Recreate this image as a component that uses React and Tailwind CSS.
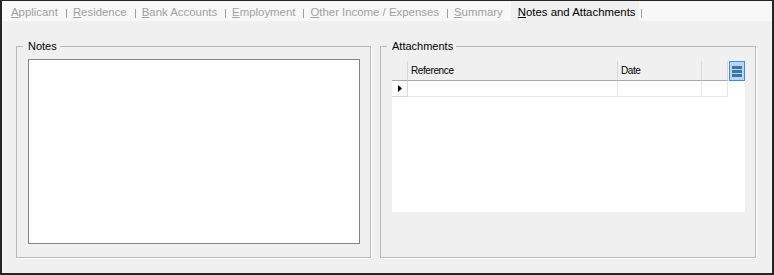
export default function App() {
  const tabs = [
    { first: "A", rest: "pplicant" },
    { first: "R", rest: "esidence" },
    { first: "B", rest: "ank Accounts" },
    { first: "E", rest: "mployment" },
    { first: "O", rest: "ther Income / Expenses" },
  ];
  return (
    <div className="w-[774px] h-[275px] bg-[#f0f0f0] border-t border-l-2 border-r-2 border-b-2 border-[#262626] flex flex-col font-['Liberation_Sans',Arial,sans-serif]">
      <div className="h-[20px] bg-[#f8f8f8] flex items-stretch text-[11.4px] leading-[14px] text-[#a0a0a0]">
        {tabs.map((t, i) => (
          <div key={t.first} className="flex items-stretch">
            <span className={`flex items-center pt-[2px] pr-[8px] ${i === 0 ? "pl-[9px]" : "pl-[6px]"}`}>
              <span>
                <u className="underline-offset-[1px]">{t.first}</u>
                {t.rest}
              </span>
            </span>
            <span className="w-px h-[9px] bg-[#a0a0a0] self-center mt-[5px]" />
          </div>
        ))}
        <span className="flex items-center pt-[2px] pl-[6px] pr-[8px]">
          <span>
            <u className="underline-offset-[1px]">S</u>ummary
          </span>
        </span>
        <span className="flex items-center pt-[2px] pl-[7px] pr-[3px] bg-[#f0f0f0] text-black">
          <span>
            <u className="underline-offset-[1px]">N</u>otes and Attachments
          </span>
        </span>
        <span className="w-px h-[9px] bg-[#a0a0a0] self-center mt-[5px] ml-[2px]" />
      </div>
      <div className="flex pl-[14px] pt-[19px] gap-[9px]">
        <fieldset className="w-[355px] h-[218px] border border-[#b9b9b9] shadow-[1px_1px_0_#ffffff]">
          <legend className="ml-[6px] pl-[5px] pr-[3px] text-[11px] leading-[13px] text-black">Notes</legend>
          <div className="pt-[6px] pl-[11px]">
            <textarea
              readOnly
              className="block w-[332px] h-[185px] bg-white border border-[#828282] resize-none outline-none"
            />
          </div>
        </fieldset>
        <fieldset className="w-[376px] h-[218px] border border-[#b9b9b9] shadow-[1px_1px_0_#ffffff]">
          <legend className="ml-[6px] pl-[5px] pr-[3px] text-[11px] leading-[13px] text-black">Attachments</legend>
          <div className="pt-[8px] pl-[11px]">
            <div className="w-[353px] h-[151px] bg-white flex flex-col text-[10px] tracking-[-0.4px] text-black">
              <div className="flex h-[20px]">
                <div className="w-[16px] bg-[#f0f0f0] border-r border-b border-r-[#d8d8d8] border-b-[#a9a9a9]" />
                <div className="w-[210px] bg-[#f0f0f0] border-r border-b border-r-[#d8d8d8] border-b-[#a9a9a9] flex items-center pl-[3px]">Reference</div>
                <div className="w-[84px] bg-[#f0f0f0] border-r border-b border-r-[#d8d8d8] border-b-[#a9a9a9] flex items-center pl-[3px]">Date</div>
                <div className="w-[26px] bg-[#f0f0f0] border-r border-b border-r-[#d8d8d8] border-b-[#a9a9a9]" />
                <div className="w-px" />
                <div className="w-[16px] h-[20px] bg-[#b8d6f1] border border-[#3c8ce0] flex flex-col items-center justify-center gap-[1px]">
                  <span className="w-[10px] h-[3px] bg-[#3a74ab]" />
                  <span className="w-[10px] h-[3px] bg-[#3a74ab]" />
                  <span className="w-[10px] h-[3px] bg-[#3a74ab]" />
                </div>
              </div>
              <div className="flex h-[16px]">
                <div className="w-[16px] border-r border-b border-[#dadada] flex items-center pl-[6px]">
                  <svg width="4" height="7" viewBox="0 0 4 7">
                    <path d="M0 0 L4 3.5 L0 7 Z" fill="#000" />
                  </svg>
                </div>
                <div className="w-[210px] border-r border-b border-[#e6e6e6]" />
                <div className="w-[84px] border-r border-b border-[#e6e6e6]" />
                <div className="w-[26px] border-r border-b border-[#e6e6e6]" />
              </div>
            </div>
          </div>
        </fieldset>
      </div>
    </div>
  );
}
